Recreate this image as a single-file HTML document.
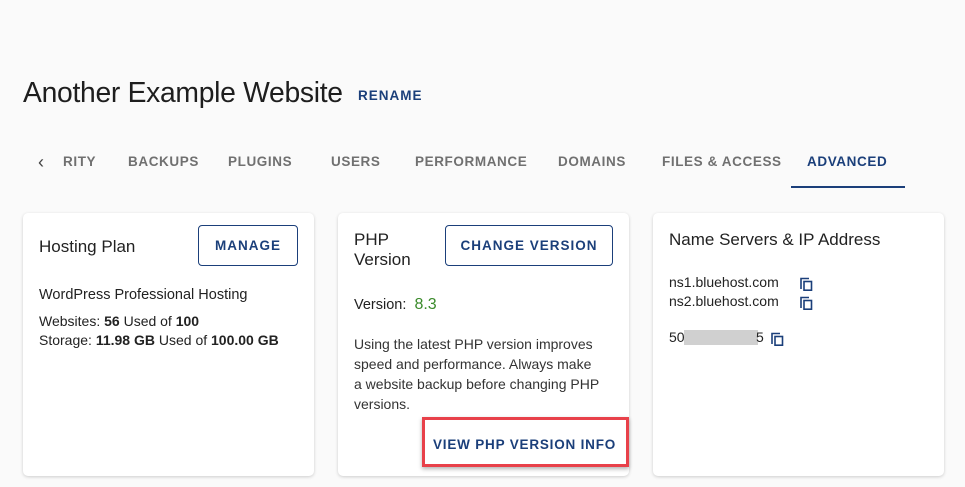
<!DOCTYPE html>
<html><head><style>
body{margin:0;width:965px;height:487px;background:#fafafa;font-family:"Liberation Sans",sans-serif;position:relative;overflow:hidden;color:#222}
.a{position:absolute;white-space:nowrap}
.tab{position:absolute;top:154px;font-size:13.5px;font-weight:bold;letter-spacing:0.6px;color:#707070}
.card{position:absolute;top:213px;width:291px;height:263px;background:#fff;border-radius:5px;box-shadow:0 1px 3px rgba(0,0,0,.18)}
.btn{position:absolute;border:1px solid #1b3f7a;border-radius:4px;color:#1b3f7a;font-weight:bold;font-size:13.5px;letter-spacing:1px;text-align:center;box-sizing:border-box}
.cp{position:absolute;width:13px;height:14px}
</style></head><body>
<div class="a" style="left:23px;top:76px;font-size:28.3px;color:#1e1e1e;letter-spacing:-0.3px">Another Example Website</div>
<div class="a" style="left:358px;top:88px;font-size:13.5px;font-weight:bold;letter-spacing:1px;color:#1b3f7a">RENAME</div>
<div class="a" style="left:38px;top:152px;font-size:18px;color:#444">‹</div>
<div class="tab" style="left:63px">RITY</div>
<div class="tab" style="left:128px">BACKUPS</div>
<div class="tab" style="left:228px">PLUGINS</div>
<div class="tab" style="left:331px">USERS</div>
<div class="tab" style="left:415px">PERFORMANCE</div>
<div class="tab" style="left:558px">DOMAINS</div>
<div class="tab" style="left:662px">FILES &amp; ACCESS</div>
<div class="tab" style="left:807px;color:#1b3f7a">ADVANCED</div>
<div class="a" style="left:791px;top:186px;width:114px;height:2px;background:#1b3f7a"></div>

<div class="card" style="left:23px">
<div class="a" style="left:16px;top:24px;font-size:17px">Hosting Plan</div>
<div class="btn" style="left:175px;top:12px;width:100px;height:41px;line-height:39px">MANAGE</div>
<div class="a" style="left:16px;top:74px;font-size:14.5px">WordPress Professional Hosting</div>
<div class="a" style="left:16px;top:100px;font-size:14px">Websites: <b>56</b> Used of <b>100</b></div>
<div class="a" style="left:16px;top:119px;font-size:14px">Storage: <b>11.98 GB</b> Used of <b>100.00 GB</b></div>
</div>

<div class="card" style="left:338px">
<div class="a" style="left:16px;top:17px;font-size:17px;line-height:20px">PHP<br>Version</div>
<div class="btn" style="left:107px;top:12px;width:168px;height:41px;line-height:39px">CHANGE VERSION</div>
<div class="a" style="left:16px;top:83px;font-size:14.5px">Version:&nbsp; <span style="color:#3a8a2a;font-size:16px">8.3</span></div>
<div class="a" style="left:16px;top:121px;font-size:14px;line-height:20px;color:#333;white-space:normal;width:262px">Using the latest PHP version improves speed and performance. Always make<br>a website backup before changing PHP versions.</div>
<div class="a" style="left:95px;top:224px;font-size:13.5px;font-weight:bold;letter-spacing:0.8px;color:#1b3f7a">VIEW PHP VERSION INFO</div>
</div>
<div class="a" style="left:422px;top:417px;width:201px;height:44px;border:3px solid #e8414a;box-shadow:0 2px 4px rgba(0,0,0,.3)"></div>

<div class="card" style="left:653px">
<div class="a" style="left:16px;top:17px;font-size:17px">Name Servers &amp; IP Address</div>
<div class="a" style="left:16px;top:61px;font-size:14px">ns1.bluehost.com</div>
<div class="a" style="left:16px;top:80px;font-size:14px">ns2.bluehost.com</div>
<svg class="cp" style="left:147px;top:64px" viewBox="0 0 13 14" fill="none" stroke="#1b3f7a" stroke-width="1.6"><path d="M1 12V1.5h8"/><rect x="4" y="4.5" width="7.5" height="8.7"/></svg>
<svg class="cp" style="left:147px;top:83px" viewBox="0 0 13 14" fill="none" stroke="#1b3f7a" stroke-width="1.6"><path d="M1 12V1.5h8"/><rect x="4" y="4.5" width="7.5" height="8.7"/></svg>
<div class="a" style="left:16px;top:116px;font-size:14px">50</div>
<div class="a" style="left:31px;top:117px;width:74px;height:15px;background:#d0d0d0"></div>
<div class="a" style="left:103px;top:116px;font-size:14px">5</div>
<svg class="cp" style="left:118px;top:119px" viewBox="0 0 13 14" fill="none" stroke="#1b3f7a" stroke-width="1.6"><path d="M1 12V1.5h8"/><rect x="4" y="4.5" width="7.5" height="8.7"/></svg>
</div>
</body></html>
